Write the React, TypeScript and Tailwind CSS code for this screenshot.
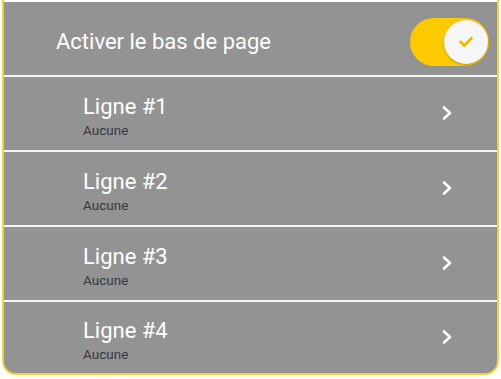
import { FaCheck } from "react-icons/fa";

const lines = ["Ligne #1", "Ligne #2", "Ligne #3", "Ligne #4"];

function Chevron() {
  return (
    <svg width="12" height="16" viewBox="0 0 12 16" fill="none" className="mb-[5px]">
      <path d="M3 2.5 L9 8 L3 13.5" stroke="#fff" strokeWidth="2.6" strokeLinecap="round" strokeLinejoin="round" />
    </svg>
  );
}

export default function App() {
  return (
    <div className="w-[501px] h-[379px] bg-white pl-[2px] pr-[2px] font-['Roboto','Liberation_Sans',sans-serif]">
      <div className="w-full h-[375px] bg-[#939393] border-l-2 border-r-2 border-b-2 border-[#f2d23c] rounded-b-[14px] flex flex-col overflow-hidden">
        <div className="h-[2px] shrink-0 bg-white" />
        <div className="h-[75px] shrink-0 flex items-center justify-between pl-[52px] pr-[8px] pt-[6px] border-b-2 border-[#f4f4f4]">
          <span className="text-[22px] text-white">Activer le bas de page</span>
          <div className="w-[79px] h-[48px] rounded-full bg-[#fdc900] flex items-center justify-end pr-[1px]">
            <div className="w-[44px] h-[44px] rounded-full bg-[#f6f6f6] shadow-[0_1px_2px_rgba(0,0,0,0.25)] flex items-center justify-center">
              <FaCheck className="text-[14px] text-[#f5b800]" />
            </div>
          </div>
        </div>
        {lines.map((l, i) => (
          <div
            key={l}
            className={`flex items-center justify-between pl-[79px] pr-[44px] pt-[4px] ${i < 3 ? "h-[75px] shrink-0 border-b-2 border-[#f4f4f4]" : "flex-1"}`}
          >
            <div className="flex flex-col">
              <span className="text-[22px] leading-[26px] text-white">{l}</span>
              <span className="text-[13.5px] leading-[16px] text-[#383838] mt-[2px]">Aucune</span>
            </div>
            <Chevron />
          </div>
        ))}
      </div>
    </div>
  );
}
